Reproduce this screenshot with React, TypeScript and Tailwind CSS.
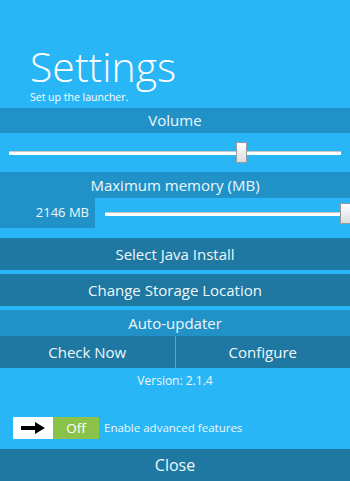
import React from "react"

function Track({ thumbLeft }: { thumbLeft: string }) {
  return (
    <div className="relative h-[21px] w-full">
      <div className="absolute left-0 right-0 top-[9px] h-[4px] border-t border-[#c8c8c8] bg-white" />
      <div
        className="absolute top-0 h-[21px] w-[11px] border border-[#9a9a9a] bg-gradient-to-b from-white to-[#dcdcdc]"
        style={{ left: thumbLeft }}
      />
    </div>
  )
}

export default function App() {
  return (
    <div
      className="flex h-[481px] w-[350px] flex-col bg-[#29b6f6] text-[#eef7fb]"
      style={{ fontFamily: '"Open Sans", "Noto Sans", sans-serif' }}
    >
      {/* Header */}
      <div className="flex h-[108px] flex-col pl-[30px] pt-[45px]">
        <div className="text-[41px] font-light leading-[42px] text-white">Settings</div>
        <div className="mt-[4px] text-[10.5px] leading-[12px] text-white">Set up the launcher.</div>
      </div>

      {/* Volume */}
      <div className="flex h-[25px] items-center justify-center bg-[#2192c8] text-[15px]">Volume</div>
      <div className="flex h-[39px] items-center px-[9px]">
        <Track thumbLeft="227px" />
      </div>

      {/* Memory */}
      <div className="flex h-[26px] items-center justify-center bg-[#2192c8] text-[15px]">
        Maximum memory (MB)
      </div>
      <div className="flex h-[30px] items-center">
        <div className="flex h-full w-[95px] items-center justify-end bg-[#2192c8] pr-[6px] text-[13px]">
          2146 MB
        </div>
        <div className="flex flex-1 items-center pl-[10px]">
          <Track thumbLeft="235px" />
        </div>
      </div>

      <div className="h-[10px]" />
      <div className="flex h-[32px] items-center justify-center bg-[#1e78a2] text-[15px]">
        Select Java Install
      </div>
      <div className="h-[4px]" />
      <div className="flex h-[32px] items-center justify-center bg-[#1e78a2] text-[15px]">
        Change Storage Location
      </div>
      <div className="h-[4px]" />

      {/* Auto-updater */}
      <div className="flex h-[26px] items-center justify-center bg-[#2192c8] text-[15px]">Auto-updater</div>
      <div className="flex h-[32px] bg-[#1e78a2] text-[15px]">
        <div className="flex flex-1 items-center justify-center border-r border-[#29b6f6]">Check Now</div>
        <div className="flex flex-1 items-center justify-center">Configure</div>
      </div>
      <div className="flex h-[26px] items-center justify-center text-[12px]">Version: 2.1.4</div>

      {/* Advanced toggle */}
      <div className="mt-[23px] flex h-[22px] items-center pl-[13px]">
        <div className="flex h-full w-[40px] items-center justify-center bg-white">
          <svg width="26" height="12" viewBox="0 0 26 12">
            <polygon points="1,4 15,4 15,0 25,6 15,12 15,8 1,8" fill="#000" />
          </svg>
        </div>
        <div className="flex h-full w-[46px] items-center justify-center bg-[#8bc34a] text-[13.5px] text-white">
          Off
        </div>
        <div className="ml-[5px] text-[11.5px]">Enable advanced features</div>
      </div>

      <div className="mt-auto flex h-[32px] items-center justify-center bg-[#1e78a2] text-[16px]">Close</div>
    </div>
  )
}
